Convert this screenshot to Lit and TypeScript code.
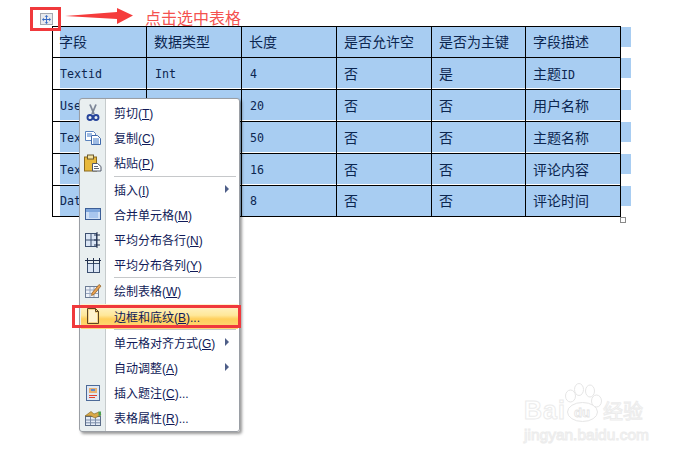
import { LitElement, html, css, svg } from "lit";
import { customElement } from "lit/decorators.js";

const rows = [
  ["字段", "数据类型", "长度", "是否允许空", "是否为主键", "字段描述"],
  ["Textid", "Int", "4", "否", "是", "主题ID"],
  ["Use", "", "20", "否", "否", "用户名称"],
  ["Tex", "", "50", "否", "否", "主题名称"],
  ["Tex", "", "16", "否", "否", "评论内容"],
  ["Dat", "", "8", "否", "否", "评论时间"],
];

const icons: Record<string, unknown> = {
  cut: svg`<path d="M6 0.500 L10 10 M12 0.500 L8 10" stroke="#7d8798" stroke-width="1.8" fill="none"/><circle cx="6" cy="13.500" r="2.500" fill="none" stroke="#25439a" stroke-width="1.900"/><circle cx="12" cy="13.500" r="2.500" fill="none" stroke="#25439a" stroke-width="1.900"/>`,
  copy: svg`<path d="M1.500 2.500h8l2 2v7h-10z" fill="#fff" stroke="#5a82bd"/><path d="M7.500 6.500h6l3 3v6h-9z" fill="#fff" stroke="#3f68aa"/><path d="M3 5h5M3 7h4M9 10h6M9 12h6M9 14h6" stroke="#3f78c8"/>`,
  paste: svg`<rect x="0.500" y="3" width="12" height="14" fill="#e8b93c" stroke="#8a6a20"/><rect x="3.500" y="1" width="6" height="4" fill="#f4e3a0" stroke="#6a5a30"/><path d="M8.500 9.500h5l3.500 3v4.500h-8.500z" fill="#fff" stroke="#50586a"/><path d="M10 12.500h4M10 14.500h5" stroke="#60687a"/>`,
  merge: svg`<rect x="1.500" y="3.500" width="15" height="11" fill="#cfe0f6" stroke="#3c5e96"/><rect x="2" y="4" width="14" height="3" fill="#7ea6dc"/><rect x="5" y="7" width="9" height="6" fill="#a8c6ee"/>`,
  rows: svg`<rect x="1.500" y="2.500" width="11" height="13" fill="#dbe6f5" stroke="#3c5070"/><path d="M7 3v12M2 9h10" stroke="#3c5070"/><path d="M13 1v16M10 4h6M10 9h6M10 14h6" stroke="#22304e" fill="none"/>`,
  cols: svg`<rect x="3.500" y="7.500" width="12" height="9" fill="#dbe6f5" stroke="#3c5070"/><path d="M9.500 8v8" stroke="#3c5070"/><path d="M1 4.500h16M3.500 2v6M9.500 2v6M15.500 2v6" stroke="#22304e" fill="none"/>`,
  draw: svg`<rect x="1.500" y="4.500" width="13" height="11" fill="#eef2f8" stroke="#6c7c94"/><path d="M2 8h12M2 11.500h12M6 5v10M10 5v10" stroke="#9aa8c0"/><path d="M8 11 L15 2.500 L17 4 L10 12.500 L7.500 13.500z" fill="#e8a050" stroke="#8a5a20" stroke-width=".7"/>`,
  borders: svg`<path d="M3.500 1.500h8l3 3v12h-11z" fill="#f5d488" stroke="#5f4520"/><path d="M5 3h6v3h2v9H5z" fill="#fff3d0"/><path d="M11.500 1.500v3h3" fill="none" stroke="#5f4520"/>`,
  caption: svg`<rect x="2.500" y="1.500" width="13" height="15" fill="#dfe8f4" stroke="#4c6a98"/><rect x="5" y="4" width="8" height="5" fill="#e8b070"/><rect x="7" y="5" width="4" height="2" fill="#5a8ad0"/><path d="M5 11.500h8M5 13.500h6" stroke="#e04030"/>`,
  props: svg`<rect x="1.500" y="7.500" width="15" height="9" fill="#e4ecf6" stroke="#5a6c88"/><path d="M2 11h14M2 13.800h14M6.500 8v8M11.500 8v8" stroke="#7a8ca8"/><path d="M1 7 L7 2.500 L10 5 L15 3 L17 6 L11 9 L7 7z" fill="#d8a848" stroke="#7a6020" stroke-width=".6"/><rect x="14.500" y="2.500" width="2.500" height="4" fill="#4aa050"/>`,
};

type Item = { t: string; k?: string; end?: string; icon?: string; sub?: boolean; hot?: boolean };
const menu: (Item | null)[] = [
  { t: "剪切", k: "T", icon: "cut" },
  { t: "复制", k: "C", icon: "copy" },
  { t: "粘贴", k: "P", icon: "paste" },
  null,
  { t: "插入", k: "I", sub: true },
  { t: "合并单元格", k: "M", icon: "merge" },
  { t: "平均分布各行", k: "N", icon: "rows" },
  { t: "平均分布各列", k: "Y", icon: "cols" },
  null,
  { t: "绘制表格", k: "W", icon: "draw" },
  { t: "边框和底纹", k: "B", end: "...", icon: "borders", hot: true },
  null,
  { t: "单元格对齐方式", k: "G", sub: true },
  { t: "自动调整", k: "A", sub: true },
  { t: "插入题注", k: "C", end: "...", icon: "caption" },
  { t: "表格属性", k: "R", end: "...", icon: "props" },
];

@customElement("app-root")
export class AppRoot extends LitElement {
  static styles = css`
    :host {
      display: block;
      position: relative;
      width: 683px;
      height: 456px;
      overflow: hidden;
      background: #fff;
      font-family: "Liberation Sans", "Noto Sans CJK SC", sans-serif;
    }
    .note {
      display: flex;
      align-items: flex-start;
      height: 26px;
      box-sizing: border-box;
      padding: 7px 0 0 30px;
    }
    .pick {
      position: relative;
      z-index: 2;
      width: 31px;
      height: 24px;
      box-sizing: border-box;
      border: 3px solid #f0393c;
      display: flex;
      align-items: center;
      justify-content: center;
      padding-left: 1px;
    }
    .handle {
      width: 13px;
      height: 12px;
      box-sizing: border-box;
      background: #e8eaee;
      border: 1px solid #a4a9b2;
      display: flex;
      align-items: center;
      justify-content: center;
    }
    .arrow {
      margin: 1px 0 0 4px;
      flex: none;
    }
    .note-text {
      margin: 1px 0 0 10px;
      font: 16px/18px "Noto Sans CJK SC", sans-serif;
      color: #f4524f;
    }
    .table {
      display: grid;
      grid-template-columns: 95px 95px 95px 95px 94px 95px 10px;
      grid-template-rows: 32px 32px 32px 32px 32px 31px;
      margin-left: 52px;
      width: 579px;
      color: #0c2650;
      font: 14px "Noto Sans CJK SC", sans-serif;
    }
    .cell {
      box-sizing: border-box;
      background: #a8cdf2;
      border-right: 1px solid #000;
      border-bottom: 1px solid #000;
      padding-left: 8px;
      display: flex;
      align-items: center;
      white-space: nowrap;
      overflow: hidden;
    }
    .cell.top {
      border-top: 1px solid #000;
    }
    .cell.first {
      border-left: 1px solid #000;
      padding-left: 7px;
      background-clip: content-box;
    }
    .cell.gap {
      box-shadow: inset 0 -1px 0 #fff;
    }
    .cjk {
      margin: -2px 0 0 -1px;
    }
    .latin {
      font: 11.63px "DejaVu Sans Mono", monospace;
    }
    .tail {
      height: 20px;
      background: #a8cdf2;
    }
    .tail.top {
      margin-top: 1px;
    }
    .resize {
      position: absolute;
      left: 620px;
      top: 217px;
      width: 6px;
      height: 6px;
      box-sizing: border-box;
      background: #fff;
      border: 1px solid #8a8a8a;
    }
    .menu {
      position: absolute;
      left: 79px;
      top: 98px;
      width: 161px;
      box-sizing: border-box;
      border: 1px solid #9a9ea4;
      border-radius: 3px;
      padding: 1px;
      background: linear-gradient(to right, #e9eff0 0 25px, #c6cbcc 25px 26px, #fff 26px);
      box-shadow: 2px 2px 3px rgba(0, 0, 0, 0.4);
      font-size: 12px;
      color: #101a58;
    }
    .item {
      display: flex;
      align-items: center;
      height: 25.2px;
      white-space: nowrap;
    }
    .item.hot {
      background: linear-gradient(#fff4cf 0%, #ffe89a 45%, #ffcf5c 60%, #ffd978 100%);
    }
    .slot {
      width: 25px;
      flex: none;
      display: flex;
      justify-content: center;
    }
    .slot svg {
      margin-left: -2px;
    }
    .label {
      margin-left: 8px;
      flex: 1;
    }
    .caret {
      width: 0;
      height: 0;
      margin-right: 9px;
      border-left: 4px solid #4e5e88;
      border-top: 4px solid transparent;
      border-bottom: 4px solid transparent;
    }
    .sep {
      height: 1px;
      margin-left: 33px;
      margin-right: 2px;
      background: #c6c8ca;
    }
    .hot-box {
      position: absolute;
      left: 72px;
      top: 305px;
      width: 169px;
      height: 23px;
      box-sizing: border-box;
      border: 3px solid #f0393c;
    }
    .mark {
      position: absolute;
      left: 524px;
      top: 383px;
      width: 125px;
      height: 60px;
      color: transparent;
      -webkit-text-stroke: 1px #ececec;
    }
    .mark-bai {
      position: absolute;
      left: 0;
      top: 12px;
      font: bold 25px/30px "Liberation Sans", sans-serif;
      letter-spacing: 1px;
    }
    .mark-jy {
      position: absolute;
      left: 79px;
      top: 15px;
      font: 20px/26px "Noto Sans CJK SC", sans-serif;
    }
    .mark-url {
      position: absolute;
      left: 0;
      top: 43px;
      font: 15.5px/18px "Liberation Sans", sans-serif;
      white-space: nowrap;
    }
    .paw {
      position: absolute;
      left: 41px;
      top: 0;
    }
    .paw-du {
      position: absolute;
      left: 50px;
      top: 22px;
      font: bold 13px/16px "Liberation Sans", sans-serif;
      -webkit-text-stroke: 0.8px #e4e4e4;
    }
  `;

  private renderCell(c: string) {
    const m = c.match(/^([^A-Za-z0-9]*)([A-Za-z0-9]*)$/);
    const cjk = m ? m[1] : c;
    const latin = m ? m[2] : "";
    if (!cjk) return html`<span class="latin">${latin}</span>`;
    return html`<span class="cjk">${cjk}${latin ? html`<span class="latin">${latin}</span>` : ""}</span>`;
  }

  private renderItem(it: Item | null) {
    if (!it) return html`<div class="sep"></div>`;
    return html`<div class="item ${it.hot ? "hot" : ""}">
      <span class="slot">
        ${it.icon
          ? html`<svg width="18" height="18" viewBox="0 0 18 18">${icons[it.icon]}</svg>`
          : ""}
      </span>
      <span class="label">${it.t}(<u>${it.k}</u>)${it.end ?? ""}</span>
      ${it.sub ? html`<span class="caret"></span>` : ""}
    </div>`;
  }

  render() {
    return html`
      <div class="note">
        <div class="pick">
          <div class="handle">
            <svg width="9" height="9" viewBox="0 0 10 10">
              <path
                d="M5 0 L7 2 H5.500 V4.500 H8 V3 L10 5 L8 7 V5.500 H5.500 V8 H7 L5 10 L3 8 H4.500 V5.500 H2 V7 L0 5 L2 3 V4.500 H4.500 V2 H3 Z"
                fill="#3569c4"
              />
            </svg>
          </div>
        </div>
        <svg class="arrow" width="70" height="18" viewBox="0 0 70 18">
          <path d="M0 8 L52 4 V0 L68 7.500 L52 16 V11 Z" fill="#f53c3c" />
        </svg>
        <div class="note-text">点击选中表格</div>
      </div>
      <div class="table">
        ${rows.map((r, y) => html`
          ${r.map((c, x) => {
            const cls = [
              "cell",
              y === 0 ? "top" : "",
              x === 0 ? "first" : "",
              y >= 1 && y <= 4 ? "gap" : "",
            ].join(" ");
            return html`<div class=${cls}>${this.renderCell(c)}</div>`;
          })}
          <div class="tail ${y === 0 ? "top" : ""}"></div>
        `)}
      </div>
      <div class="resize"></div>
      <div class="menu">${menu.map((m) => this.renderItem(m))}</div>
      <div class="hot-box"></div>
      <div class="mark">
        <svg class="paw" width="40" height="44" viewBox="0 0 40 44">
          <g fill="#fff" stroke="#e6e6e6">
            <ellipse cx="5.500" cy="13" rx="5" ry="6" />
            <ellipse cx="14" cy="6.500" rx="4.500" ry="6" />
            <ellipse cx="25" cy="8" rx="4.500" ry="6" />
            <ellipse cx="31.500" cy="18" rx="5" ry="6" />
            <ellipse cx="17.500" cy="29" rx="15" ry="9.500" />
          </g>
        </svg>
        <span class="paw-du">du</span>
        <span class="mark-bai">Bai</span>
        <span class="mark-jy">经验</span>
        <span class="mark-url">jingyan.baidu.com</span>
      </div>
    `;
  }
}
